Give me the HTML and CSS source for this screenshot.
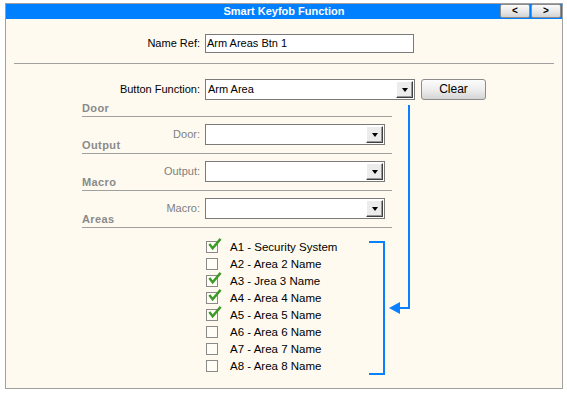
FILE: index.html
```html
<!DOCTYPE html>
<html>
<head>
<meta charset="utf-8">
<link rel="stylesheet" href="styles.css">
</head>
<body>
<div class="panel">
  <div class="titlebar">
    <span></span>
    <span class="title">Smart Keyfob Function</span>
    <span class="navs"><span class="nav">&lt;</span><span class="nav">&gt;</span></span>
  </div>

  <div class="row name-row">
    <label class="lbl">Name Ref:</label>
    <div class="textbox">Arm Areas Btn 1</div>
  </div>
  <div class="sep"></div>

  <div class="row func-row">
    <label class="lbl">Button Function:</label>
    <div class="func-controls">
      <div class="combo wide"><span class="val">Arm Area</span><span class="drop"><i></i></span></div>
      <div class="btn clear">Clear</div>
    </div>
  </div>

  <div class="heading first">Door</div>
  <div class="row sub-row">
    <label class="lbl dim">Door:</label>
    <div class="combo"><span class="val"></span><span class="drop"><i></i></span></div>
  </div>

  <div class="heading">Output</div>
  <div class="row sub-row">
    <label class="lbl dim">Output:</label>
    <div class="combo"><span class="val"></span><span class="drop"><i></i></span></div>
  </div>

  <div class="heading">Macro</div>
  <div class="row sub-row">
    <label class="lbl dim">Macro:</label>
    <div class="combo"><span class="val"></span><span class="drop"><i></i></span></div>
  </div>

  <div class="heading">Areas</div>
  <ul class="areas">
    <li><span class="cb on"><svg viewBox="0 0 16 16"><path d="M2.5 7.5 L6 12 L14.5 2" /></svg></span>A1 - Security System</li>
    <li><span class="cb"></span>A2 - Area 2 Name</li>
    <li><span class="cb on"><svg viewBox="0 0 16 16"><path d="M2.5 7.5 L6 12 L14.5 2" /></svg></span>A3 - Jrea 3 Name</li>
    <li><span class="cb on"><svg viewBox="0 0 16 16"><path d="M2.5 7.5 L6 12 L14.5 2" /></svg></span>A4 - Area 4 Name</li>
    <li><span class="cb on"><svg viewBox="0 0 16 16"><path d="M2.5 7.5 L6 12 L14.5 2" /></svg></span>A5 - Area 5 Name</li>
    <li><span class="cb"></span>A6 - Area 6 Name</li>
    <li><span class="cb"></span>A7 - Area 7 Name</li>
    <li><span class="cb"></span>A8 - Area 8 Name</li>
  </ul>
</div>

<svg class="annot" width="567" height="393" viewBox="0 0 567 393">
  <path d="M409 105 V308 H399" fill="none" stroke="#0a80ff" stroke-width="2"/>
  <polygon points="389,308 400,302 400,314" fill="#0a80ff"/>
  <path d="M369 242 H384 V374 H369" fill="none" stroke="#0a80ff" stroke-width="2"/>
</svg>
</body>
</html>
```

FILE: styles.css
```css
* { box-sizing: border-box; }
html, body { margin: 0; padding: 0; background: #ffffff; }
body {
  position: relative;
  width: 567px;
  height: 393px;
  font-family: "Liberation Sans", Arial, sans-serif;
  font-size: 11px;
  color: #000;
}
.panel {
  margin: 3px 0 0 5px;
  width: 558px;
  height: 386px;
  border: 1px solid #a0a0a0;
  background: #fefaf0;
}
.titlebar {
  height: 15px;
  background: #0080ff;
  display: grid;
  grid-template-columns: 1fr auto 1fr;
  align-items: center;
}
.title {
  color: #fff;
  font-weight: bold;
  font-size: 11px;
  line-height: 15px;
}
.navs {
  justify-self: end;
  display: flex;
  gap: 1px;
  padding-right: 1px;
  height: 15px;
}
.nav {
  width: 30px;
  height: 14px;
  border: 1px solid #8c8c8c;
  border-radius: 2px;
  background: linear-gradient(#fbfbfb, #e6e6e6 60%, #d2d2d2);
  font-size: 10px;
  font-weight: bold;
  line-height: 12px;
  text-align: center;
  color: #000;
}
.row {
  display: grid;
  grid-template-columns: 194px auto;
  column-gap: 5px;
  align-items: center;
}
.lbl { text-align: right; line-height: 13px; }
.lbl.dim { color: #808080; }
.name-row { margin-top: 15px; }
.textbox {
  width: 209px;
  height: 19px;
  border: 1px solid #7a7a7a;
  background: #fff;
  padding: 0 1px;
  line-height: 16px;
}
.sep {
  margin: 10px 8px 0 8px;
  height: 1px;
  background: #a0a0a0;
}
.func-row { margin-top: 15px; }
.func-controls { display: flex; gap: 6px; }
.combo {
  width: 180px;
  height: 21px;
  border: 1px solid #7a7a7a;
  background: #fff;
  display: flex;
  align-items: center;
  padding: 1px;
}
.combo.wide { width: 210px; }
.combo .val { flex: 1; padding-left: 1px; line-height: 17px; }
.drop {
  width: 17px;
  height: 17px;
  background: #ececec;
  border-top: 1px solid #fff;
  border-left: 1px solid #fff;
  border-right: 1px solid #404040;
  border-bottom: 1px solid #404040;
  box-shadow: inset -1px -1px 0 #9a9a9a;
  display: flex;
  align-items: center;
  justify-content: center;
}
.drop i {
  width: 0;
  height: 0;
  border-left: 3.5px solid transparent;
  border-right: 3.5px solid transparent;
  border-top: 4px solid #000;
  margin-top: 1px;
}
.btn.clear {
  width: 65px;
  height: 21px;
  border: 1px solid #8c8c8c;
  border-radius: 3px;
  background: linear-gradient(#fcfcfc, #ececec 55%, #d4d4d4);
  text-align: center;
  line-height: 19px;
  font-size: 12px;
}
.heading {
  margin: -6px 0 0 76px;
  width: 310px;
  height: 15px;
  padding-top: 0;
  line-height: 12px;
  border-bottom: 1px solid #a0a0a0;
  color: #8a8a8a;
  font-weight: bold;
  letter-spacing: 0.4px;
}
.heading.first { margin-top: 2px; }
.sub-row { margin-top: 7px; }
.areas {
  list-style: none;
  margin: 10px 0 0 200px;
  padding: 0;
}
.areas li {
  height: 17px;
  display: flex;
  align-items: center;
  font-size: 11.5px;
}
.cb {
  position: relative;
  width: 12px;
  height: 12px;
  border: 1px solid #8a8a8a;
  background: #fffdf6;
  margin-right: 12px;
  flex: none;
}
.cb svg {
  position: absolute;
  left: 0;
  top: -5px;
  width: 15px;
  height: 15px;
  fill: none;
  stroke: #3c9a28;
  stroke-width: 2.6;
  stroke-linejoin: miter;
}
.annot {
  position: absolute;
  left: 0;
  top: 0;
  pointer-events: none;
}
```
